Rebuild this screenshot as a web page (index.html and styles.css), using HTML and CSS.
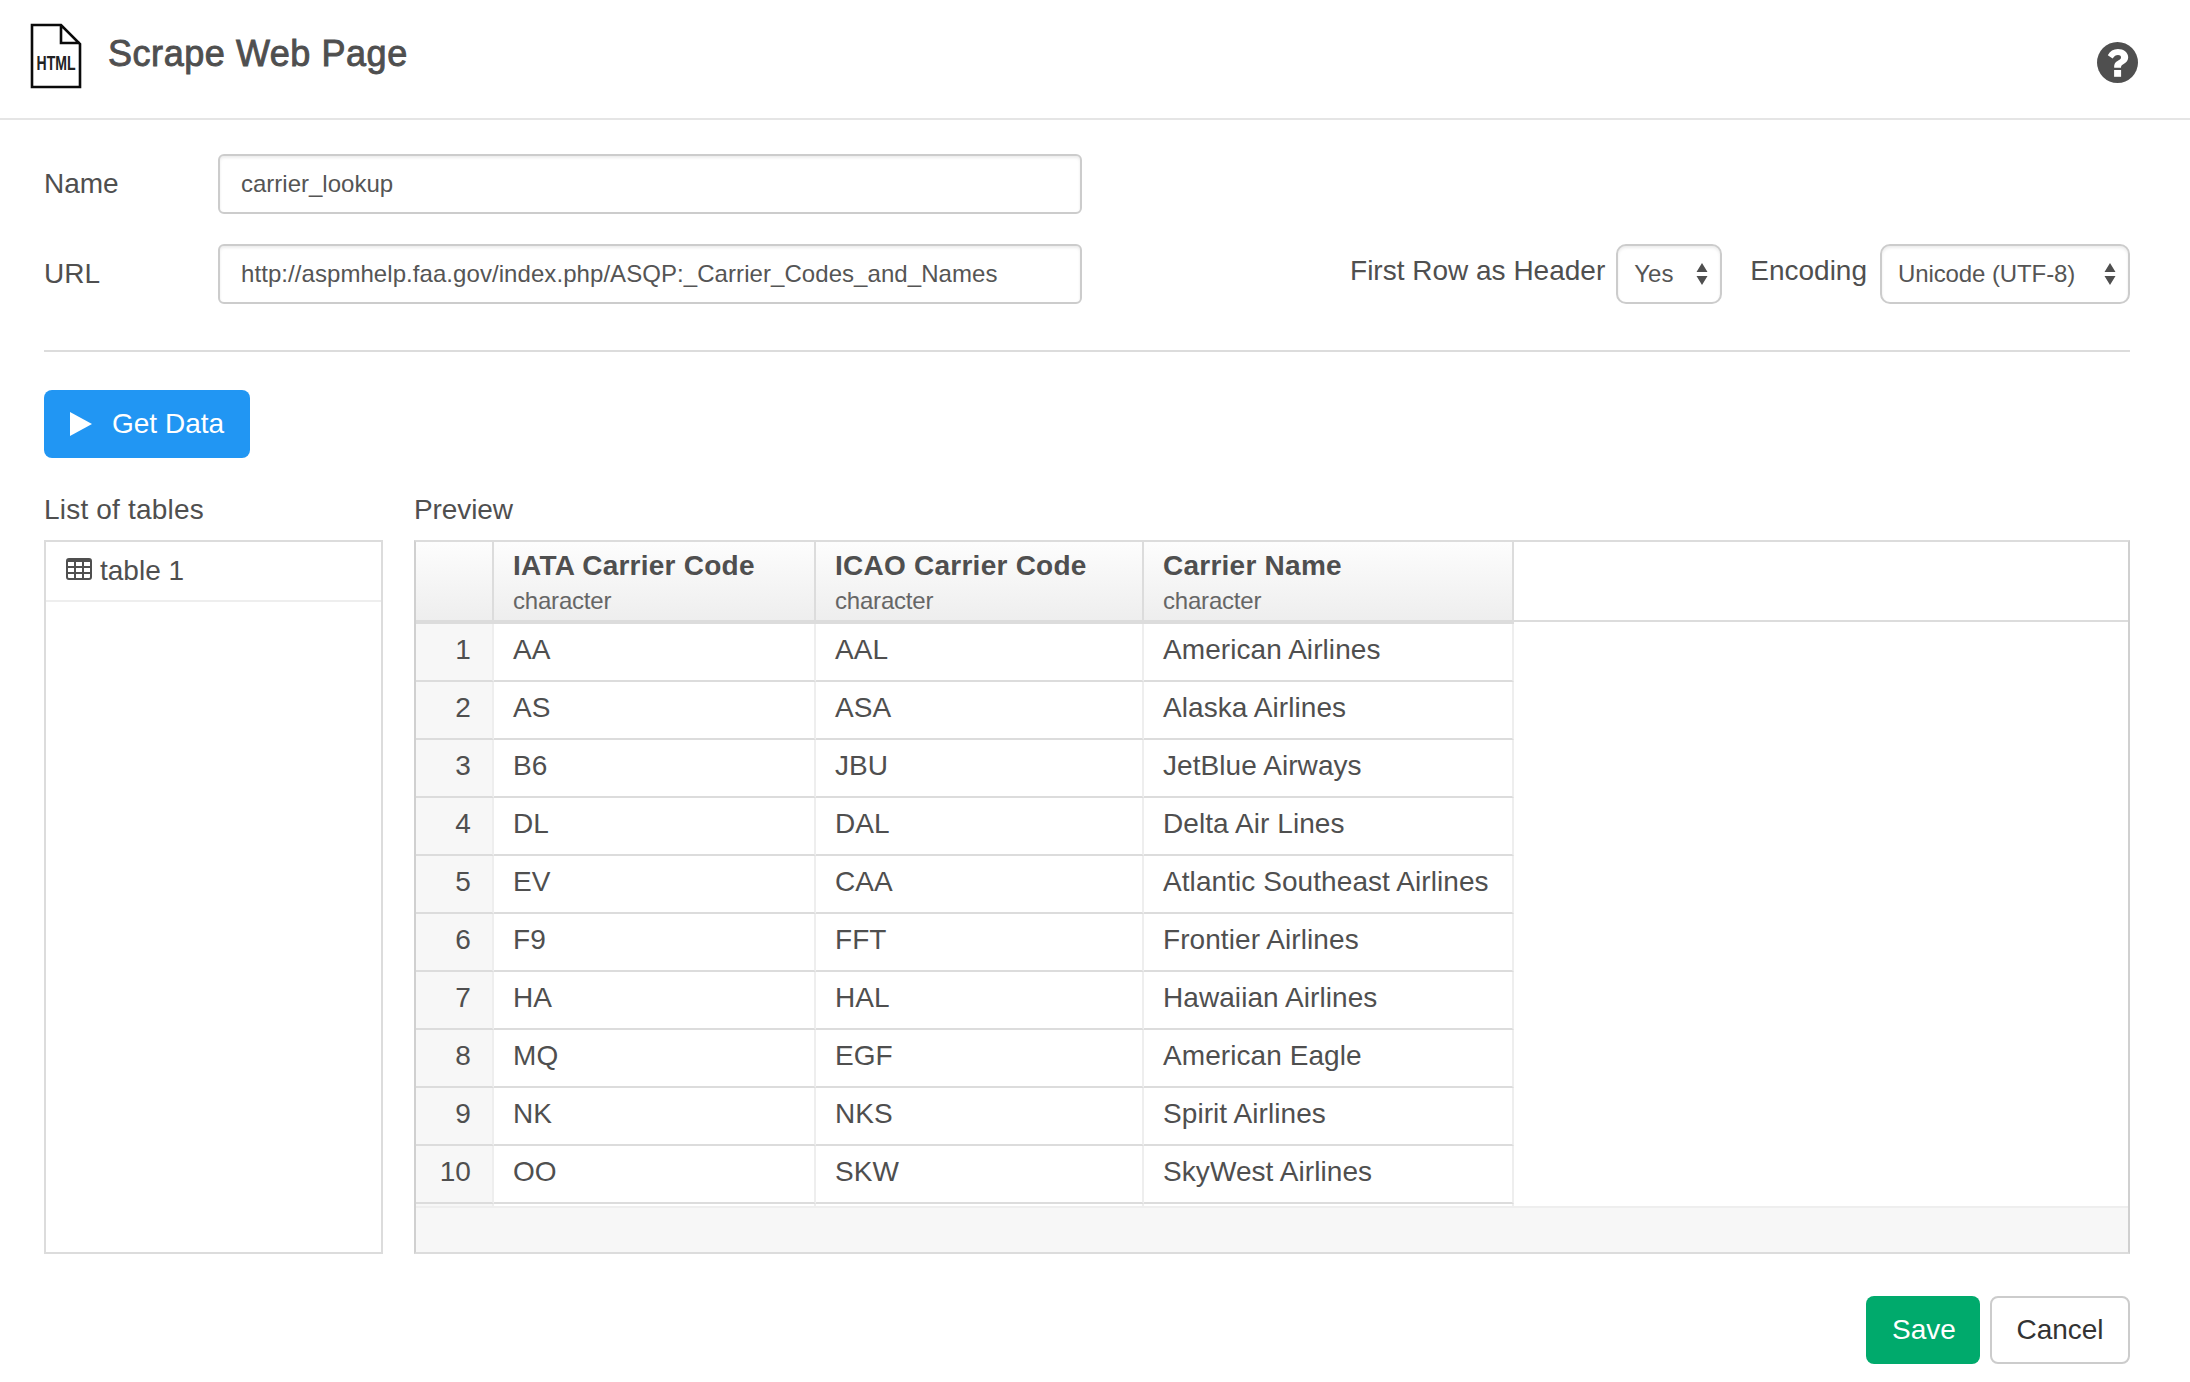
FILE: index.html
```html
<!DOCTYPE html>
<html lang="en">
<head>
<meta charset="utf-8">
<title>Scrape Web Page</title>
<link rel="stylesheet" href="styles.css">
</head>
<body>
<header class="header">
  <svg class="file-icon" viewBox="0 0 50 64" aria-hidden="true">
    <path d="M1 1H30L49 20V63H1Z M30 1V19H49" fill="none" stroke="#0a0a0a" stroke-width="2.6"/>
    <text x="5.5" y="45.8" font-size="21" font-weight="bold" textLength="39" lengthAdjust="spacingAndGlyphs" fill="#222">HTML</text>
  </svg>
  <h1 class="title">Scrape Web Page</h1>
  <svg class="help" viewBox="0 0 41 41" aria-hidden="true">
    <circle cx="20.5" cy="20.5" r="20.5" fill="#4f4f4f"/>
    <path d="M10.8 13.2C13 9.2 16.4 7 20.9 7C26.6 7 31.2 10.4 31.2 15.2C31.2 18.2 29.6 20.3 26.3 22.2C24.4 23.3 24 24 24 25.8H17.2C17 21.8 18.2 20.2 21.2 18.5C23.4 17.2 24 16.5 24 15.2C24 13.8 22.7 12.9 21 12.9C18.8 12.9 17.4 13.9 15.6 16.6Z" fill="#fff"/>
    <rect x="17.1" y="28" width="7" height="6.8" fill="#fff"/>
  </svg>
</header>
<main class="main">
  <div class="row">
    <label class="label" for="name">Name</label>
    <input class="input" id="name" value="carrier_lookup">
  </div>
  <div class="row">
    <label class="label" for="url">URL</label>
    <input class="input url" id="url" value="http://aspmhelp.faa.gov/index.php/ASQP:_Carrier_Codes_and_Names">
    <div class="options">
      <span class="option-label first">First Row as Header</span>
      <div class="select yes"><span>Yes</span><svg class="arrows" viewBox="0 0 12 22"><path d="M6 0L11.5 9H.5ZM6 22L11.5 13H.5Z"/></svg></div>
      <span class="option-label enc">Encoding</span>
      <div class="select unicode"><span>Unicode (UTF-8)</span><svg class="arrows" viewBox="0 0 12 22"><path d="M6 0L11.5 9H.5ZM6 22L11.5 13H.5Z"/></svg></div>
    </div>
  </div>
  <hr class="rule">
  <button class="btn get"><svg class="play" viewBox="0 0 22 24"><path d="M0 0L22 12L0 24Z" fill="#fff"/></svg><span>Get Data</span></button>
  <div class="panels">
    <section class="list">
      <h2 class="caption list-caption">List of tables</h2>
      <div class="list-box">
        <div class="list-item">
          <svg class="grid-icon" viewBox="0 0 26 22"><path d="M3 0H23Q26 0 26 3V19Q26 22 23 22H3Q0 22 0 19V3Q0 0 3 0ZM2 4V8H8V4ZM10 4V8H16V4ZM18 4V8H24V4ZM2 10V14H8V10ZM10 10V14H16V10ZM18 10V14H24V10ZM2 16V19Q2 20 3 20H8V16ZM10 16V20H16V16ZM18 16V20H23Q24 20 24 19V16Z" fill="#4f4f4f" fill-rule="evenodd"/></svg>
          <span>table 1</span>
        </div>
      </div>
    </section>
    <section class="preview">
      <h2 class="caption preview-caption">Preview</h2>
      <div class="preview-box">
        <div class="viewport">
          <table class="table">
            <colgroup><col class="c0"><col class="c1"><col class="c2"><col class="c3"><col></colgroup>
            <thead><tr>
              <th></th>
              <th><div class="col-name">IATA Carrier Code</div><div class="type">character</div></th>
              <th><div class="col-name">ICAO Carrier Code</div><div class="type">character</div></th>
              <th><div class="col-name">Carrier Name</div><div class="type">character</div></th>
              <th class="rest"></th>
            </tr></thead>
            <tbody>
              <tr><td>1</td><td>AA</td><td>AAL</td><td>American Airlines</td></tr>
              <tr><td>2</td><td>AS</td><td>ASA</td><td>Alaska Airlines</td></tr>
              <tr><td>3</td><td>B6</td><td>JBU</td><td>JetBlue Airways</td></tr>
              <tr><td>4</td><td>DL</td><td>DAL</td><td>Delta Air Lines</td></tr>
              <tr><td>5</td><td>EV</td><td>CAA</td><td>Atlantic Southeast Airlines</td></tr>
              <tr><td>6</td><td>F9</td><td>FFT</td><td>Frontier Airlines</td></tr>
              <tr><td>7</td><td>HA</td><td>HAL</td><td>Hawaiian Airlines</td></tr>
              <tr><td>8</td><td>MQ</td><td>EGF</td><td>American Eagle</td></tr>
              <tr><td>9</td><td>NK</td><td>NKS</td><td>Spirit Airlines</td></tr>
              <tr><td>10</td><td>OO</td><td>SKW</td><td>SkyWest Airlines</td></tr>
              <tr><td></td><td></td><td></td><td></td></tr>
            </tbody>
          </table>
        </div>
        <div class="table-footer"></div>
      </div>
    </section>
  </div>
  <div class="actions">
    <button class="btn save">Save</button>
    <button class="btn cancel">Cancel</button>
  </div>
</main>
</body>
</html>
```
FILE: styles.css
```css
* { box-sizing: border-box; }
body {
  margin: 0;
  background: #fff;
  color: #4f4f4f;
  font: 28px/32px "Liberation Sans", Arial, sans-serif;
}
.header {
  display: flex;
  align-items: flex-start;
  height: 120px;
  padding: 24px 52px 0 31px;
  border-bottom: 2px solid #e5e5e5;
}
.file-icon { width: 50px; height: 64px; overflow: visible; }
.title {
  margin: 9px 0 0 27px;
  font-size: 36px;
  line-height: 42px;
  font-weight: normal;
  letter-spacing: .55px;
  -webkit-text-stroke: .9px #4f4f4f;
}
.help { width: 41px; height: 41px; margin: 18px 0 0 auto; }
.main { padding: 34px 60px 0 44px; }
.row { display: flex; align-items: center; height: 60px; margin-bottom: 30px; }
.label { width: 174px; }
.input {
  width: 864px;
  height: 60px;
  padding: 0 21px;
  border: 2px solid #ccc;
  border-radius: 6px;
  background: #fff;
  box-shadow: inset 0 2px 3px rgba(0, 0, 0, .08);
  color: #555;
  font: 24px "Liberation Sans", Arial, sans-serif;
}
.url { letter-spacing: .065px; }
.options { display: flex; align-items: center; margin-left: auto; }
.option-label { margin-top: -7px; white-space: nowrap; }
.first { margin-right: 11px; }
.enc { margin: -7px 13px 0 28px; }
.select {
  display: flex;
  align-items: center;
  justify-content: space-between;
  height: 60px;
  padding: 0 12px 0 16px;
  border: 2px solid #ccc;
  border-radius: 10px;
  box-shadow: inset 0 2px 3px rgba(0, 0, 0, .08);
  color: #555;
  font-size: 24px;
}
.yes { width: 106px; }
.unicode { width: 250px; letter-spacing: -.1px; }
.arrows { width: 12px; height: 22px; fill: #4f4f4f; }
.rule { height: 2px; margin: 46px 0 38px; border: 0; background: #dcdcdc; }
.btn {
  height: 68px;
  padding: 0;
  border: 0;
  border-radius: 8px;
  color: #fff;
  font: 28px "Liberation Sans", Arial, sans-serif;
}
.get { display: flex; align-items: center; width: 206px; padding-left: 26px; background: #2196f3; }
.play { width: 22px; height: 24px; margin-right: 20px; }
.panels { display: flex; gap: 31px; margin-top: 36px; }
.list { width: 339px; }
.preview { flex: 1; }
.caption { margin: 0 0 14px; font-size: 28px; line-height: 32px; font-weight: normal; }
.list-caption { letter-spacing: .2px; }
.preview-caption { letter-spacing: -.1px; }
.list-box { height: 714px; border: 2px solid #dcdcdc; }
.list-item { display: flex; align-items: center; height: 60px; padding: 0 0 1px 20px; border-bottom: 2px solid #eee; }
.grid-icon { width: 26px; height: 22px; margin: -3px 8px 0 0; }
.preview-box { height: 714px; border: 2px solid #dcdcdc; border-left-color: #d0d0d0; border-right-color: #d0d0d0; }
.viewport { height: 664px; overflow: hidden; }
.table { width: 100%; table-layout: fixed; border-spacing: 0; letter-spacing: .07px; }
.c0 { width: 78px; }
.c1 { width: 322px; }
.c2 { width: 328px; }
.c3 { width: 370px; }
th {
  height: 82px;
  padding: 0 0 0 19px;
  border-right: 2px solid #dcdcdc;
  border-bottom: 4px solid #dcdcdc;
  background: linear-gradient(#fdfdfd, #eee);
  text-align: left;
  vertical-align: top;
  white-space: nowrap;
}
.col-name { margin-top: 8px; letter-spacing: .25px; }
.type { margin-top: 5px; font-size: 24px; line-height: 28px; font-weight: normal; letter-spacing: -.2px; color: #666; }
.rest { border-right: 0; border-bottom: 0; background: linear-gradient(#dcdcdc, #dcdcdc) 0 78px / 100% 2px no-repeat; }
td {
  height: 58px;
  padding: 0 0 4px 19px;
  border-right: 2px solid #eee;
  border-bottom: 2px solid #dcdcdc;
  white-space: nowrap;
}
td:first-child { padding: 0 21px 4px 0; background: #f7f7f7; text-align: right; }
.table-footer { height: 46px; border-top: 2px solid #eee; background: #f7f7f7; }
.actions { display: flex; justify-content: flex-end; gap: 10px; margin-top: 42px; }
.save { width: 114px; padding-left: 2px; background: #00aa6c; }
.cancel { width: 140px; border: 2px solid #ccc; background: #fff; color: #333; }
```
